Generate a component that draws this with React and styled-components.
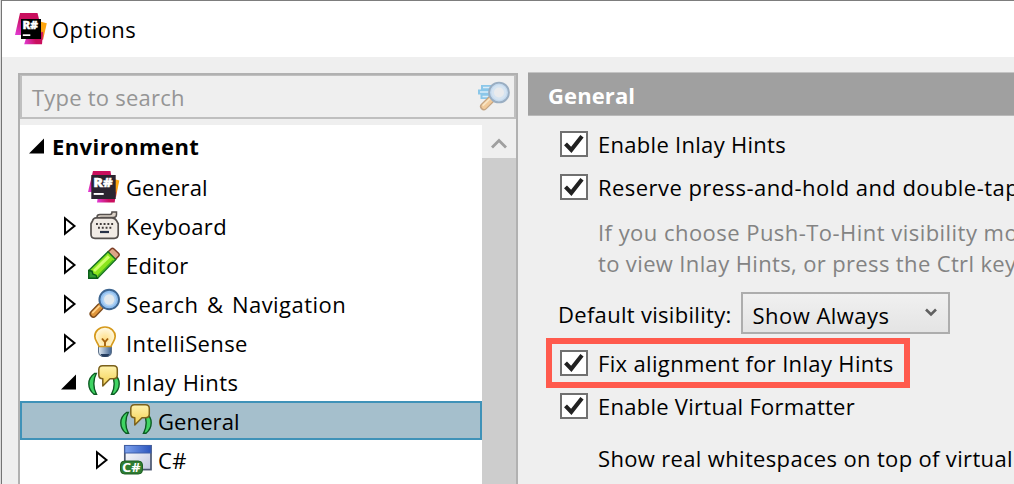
import React from "react";
import styled, { createGlobalStyle } from "styled-components";

const GlobalStyle = createGlobalStyle`
  * {
    box-sizing: border-box;
  }
  body {
    margin: 0;
    overflow: hidden;
    background: #dcdcdc;
  }
  svg {
    flex: none;
    overflow: visible;
  }
`;

/* ---------- icons ---------- */

const ReSharperDefs = () => (
  <defs>
    <linearGradient id="rsLeft" x1="0.6" y1="0" x2="0.1" y2="1">
      <stop offset="0.35" stopColor="#c90f5e" />
      <stop offset="1" stopColor="#e03ad0" />
    </linearGradient>
    <linearGradient id="rsBottom" x1="0" y1="0.8" x2="1" y2="0.6">
      <stop offset="0" stopColor="#e03ad0" />
      <stop offset="0.6" stopColor="#c90f5e" />
    </linearGradient>
    <linearGradient id="rsRight" x1="0.6" y1="0" x2="0.3" y2="1">
      <stop offset="0.4" stopColor="#fda50f" />
      <stop offset="1" stopColor="#e0453a" />
    </linearGradient>
  </defs>
);

const ReSharperText = styled.text`
  fill: #fff;
  stroke: #fff;
  stroke-width: 0.4px;
  font-family: "Open Sans", sans-serif;
  font-weight: 800;
`;

const ReSharperIcon = () => (
  <svg width="32" height="32" viewBox="0 0 32 32">
    <ReSharperDefs />
    <path d="M25 8.500l6.800 1.700L28 27l-6-4z" fill="url(#rsRight)" />
    <path d="M5 0h17.500l2.500 10-12 12H0z" fill="url(#rsLeft)" />
    <path d="M12 22l16-3-1 12.300H9.200z" fill="url(#rsBottom)" />
    <rect x="6" y="6" width="20" height="20" fill="#000" />
    <ReSharperText x="7.500" y="16" fontSize="10.5" textLength="15.5" lengthAdjust="spacingAndGlyphs">
      R#
    </ReSharperText>
    <rect x="7.800" y="21.300" width="7.500" height="1.700" fill="#fff" />
  </svg>
);

const ReSharperSmallIcon = () => (
  <svg width="32" height="32" viewBox="0 0 32 32">
    <ReSharperDefs />
    <path d="M26 8l5.300 1.500L28 26l-6-3z" fill="url(#rsRight)" />
    <path d="M5 0h17.500l1.500 10-12 11H0z" fill="url(#rsLeft)" />
    <path d="M10 25l18-4-1.300 10.500H9z" fill="url(#rsBottom)" />
    <rect x="3.300" y="4" width="24.400" height="24" fill="#2b2430" />
    <ReSharperText x="5.2" y="15.8" fontSize="12.8" textLength="19.5" lengthAdjust="spacingAndGlyphs">
      R#
    </ReSharperText>
    <rect x="5.700" y="22" width="10" height="1.900" fill="#fff" />
  </svg>
);

const KeyboardIcon = () => (
  <svg width="32" height="32" viewBox="0 0 32 32">
    <path
      d="M9 8.500V7q0-2.500 3-2.500h10q2 0 2-2.500h4.500v2.500q0 3-3 3H13v2"
      fill="#ddd3c8"
      stroke="#55504e"
      strokeWidth="1.500"
    />
    <path
      d="M8 7.800h16q3 0 4.700 3l1.500 3v10.500q0 4-4 4H7q-4 0-4-4V13.800l1.500-3q1-3 3.500-3z"
      fill="#f1ebe5"
      stroke="#55504e"
      strokeWidth="1.700"
    />
    <path
      d="M8 14h18M10 17.800h15"
      stroke="#413c3b"
      strokeWidth="2"
      strokeDasharray="1.900 1.900"
    />
    <path d="M12 22h9" stroke="#283248" strokeWidth="2.200" />
  </svg>
);

const PencilIcon = () => (
  <svg width="32" height="32" viewBox="0 0 32 32">
    <path
      d="M20 3l3-3q1.500-1.400 3 0l4.500 4.300q1.400 1.500 0 3l-3.500 3.500z"
      fill="#dda586"
      stroke="#7c3d25"
      strokeWidth="1.500"
    />
    <path d="M.8 21.500L20 2.800l7.700 7.700L9.500 29.200H.8z" fill="#8be51d" stroke="#177324" strokeWidth="1.500" />
    <path d="M5 21L19.800 6.200l2.200 2.200L7 23z" fill="#d0ff6c" />
    <path d="M9.300 26.500L24.800 10.700l1 1L10 27.800z" fill="#46b51c" />
    <path d="M.8 21.500l3.200.700 1 3 3 1 1.300 3H.8z" fill="#2f9c30" stroke="#095b18" strokeWidth="1.400" />
  </svg>
);

const MagnifierIcon = () => (
  <svg width="32" height="32" viewBox="0 0 32 32">
    <path d="M12 19L5.300 26" stroke="#7d4c1d" strokeWidth="7.600" strokeLinecap="round" />
    <path d="M12.500 18.500L5.500 25.800" stroke="#e0953a" strokeWidth="5" strokeLinecap="round" />
    <path d="M11 18.300L4.800 24.600" stroke="#ffd28a" strokeWidth="1.800" strokeLinecap="round" />
    <circle cx="21.200" cy="11.500" r="9.800" fill="#8fbff0" stroke="#3d6590" strokeWidth="1.900" />
    <circle cx="21.200" cy="11.500" r="7" fill="#b0d2f3" />
    <circle cx="21.200" cy="11.500" r="5.200" fill="#e2e9ed" />
  </svg>
);

const SearchBoxIcon = () => (
  <svg width="34" height="32" viewBox="0 0 34 32" opacity="0.6">
    <path d="M4 6.500h12M1 11h14M3.500 15.500h9" stroke="#4aaee6" strokeWidth="4.800" />
    <path d="M6 6.500h9M3 11h10M5.500 15.500h6" stroke="#cdecff" strokeWidth="1.600" />
    <path d="M14 18.500L6.800 25.500" stroke="#a8743c" strokeWidth="7.600" strokeLinecap="round" />
    <path d="M14.500 18L7 25.300" stroke="#f3b263" strokeWidth="5.200" strokeLinecap="round" />
    <path d="M12.500 18.200L6.300 24.200" stroke="#ffdfa8" strokeWidth="1.800" strokeLinecap="round" />
    <circle cx="22" cy="11.500" r="9.900" fill="#a9cdf0" stroke="#6283a5" strokeWidth="1.900" />
    <circle cx="22" cy="11.500" r="7.500" fill="#c6def3" />
    <circle cx="22" cy="11.500" r="5" fill="#e8eaec" />
  </svg>
);

const BulbIcon = () => (
  <svg width="32" height="32" viewBox="0 0 32 32">
    <defs>
      <linearGradient id="bulbBase" x1="0" y1="0" x2="1" y2="0">
        <stop offset="0" stopColor="#e4edf5" />
        <stop offset="1" stopColor="#3f628f" />
      </linearGradient>
      <radialGradient id="bulbGlass" cx="0.5" cy="0.6" r="0.6">
        <stop offset="0" stopColor="#ffe08a" />
        <stop offset="1" stopColor="#fffbe9" />
      </radialGradient>
    </defs>
    <path d="M10.500 19h13v6q0 3.500-3.500 4.500h-6q-3.500-1-3.500-4.500z" fill="url(#bulbBase)" stroke="#5c7089" strokeWidth="1" />
    <path d="M12.500 27h9q-1 3-4.500 3t-4.500-3z" fill="#263e60" />
    <path
      d="M17 0c6 0 10.200 4.300 10.200 9.300 0 4.200-2.700 5.700-4.200 10.200H11c-1.500-4.500-4.200-6-4.200-10.200C6.800 4.300 11 0 17 0z"
      fill="url(#bulbGlass)"
      stroke="#d69a1c"
      strokeWidth="1.700"
    />
    <path d="M14 11.500l3 3.500 3-3.500M17 15v4" fill="none" stroke="#a5620f" strokeWidth="1.900" />
  </svg>
);

const HintsIcon = () => (
  <svg width="32" height="32" viewBox="0 0 32 32">
    <defs>
      <linearGradient id="bubble" x1="0" y1="0" x2="0" y2="1">
        <stop offset="0" stopColor="#fff3ae" />
        <stop offset="1" stopColor="#f3cf50" />
      </linearGradient>
    </defs>
    <path
      d="M8.300 7.500H6.500Q.8 11.500.8 17.700T6 28.300h2.500Q5.800 23.500 5.800 17.700T8.300 7.500z"
      fill="#3fd463"
      stroke="#0b5a22"
      strokeWidth="1.400"
    />
    <path
      d="M23.700 7.500h1.800q5.700 4 5.700 10.200T26 28.300h-2.500q2.700-4.800 2.700-10.600T23.700 7.500z"
      fill="#3fd463"
      stroke="#0b5a22"
      strokeWidth="1.400"
    />
    <path
      d="M14.500-.2h11q3.800 0 3.800 3.800v5.400q0 3.800-3.800 3.800H22L14.800 20v-7.200q-4 0-4-3.800V3.600q0-3.800 3.700-3.800z"
      fill="url(#bubble)"
      stroke="#7b611c"
      strokeWidth="1.500"
      strokeLinejoin="round"
    />
  </svg>
);

const CSharpIcon = () => (
  <svg width="32" height="32" viewBox="0 0 32 32">
    <defs>
      <linearGradient id="winBar" x1="0" y1="0" x2="1" y2="0">
        <stop offset="0" stopColor="#7fa3ee" />
        <stop offset="1" stopColor="#2b55bd" />
      </linearGradient>
      <linearGradient id="winBody" x1="0" y1="0" x2="1" y2="1">
        <stop offset="0" stopColor="#ffffff" />
        <stop offset="1" stopColor="#c0c7e0" />
      </linearGradient>
    </defs>
    <rect x="4.800" y="1.800" width="26.200" height="23.800" fill="url(#winBody)" stroke="#4b5670" strokeWidth="1.700" />
    <rect x="4.800" y="1.500" width="26.200" height="7.500" fill="url(#winBar)" stroke="#3f5fa8" strokeWidth="1" />
    <rect x="0.500" y="17" width="22" height="13" rx="4" fill="#2f7d32" stroke="#1e5f24" strokeWidth="1" />
    <text
      x="2"
      y="27.800"
      fill="#fff"
      fontFamily="Open Sans, sans-serif"
      fontWeight="700"
      fontSize="12.500"
      textLength="18.500"
      lengthAdjust="spacingAndGlyphs"
    >
      C#
    </text>
  </svg>
);

const CheckMark = () => (
  <svg width="24" height="22" viewBox="0 0 24 22">
    <path d="M3.500 10.800l5.800 6L20 3.300" fill="none" stroke="#212121" strokeWidth="4.100" />
  </svg>
);

const Arrow = ({ open }) => (
  <svg width="16" height="20" viewBox="0 0 16 20">
    {open ? (
      <path d="M15 2.500v15H0z" fill="#000" />
    ) : (
      <path d="M4 2.300v15.400L13.500 10z" fill="#fff" stroke="#000" strokeWidth="2" />
    )}
  </svg>
);

/* ---------- data ---------- */

const treeItems = [
  { label: "Environment", level: 0, arrow: "open", spacing: 0.42 },
  { label: "General", level: 1, icon: <ReSharperSmallIcon />, spacing: 0.1 },
  { label: "Keyboard", level: 1, arrow: "closed", icon: <KeyboardIcon />, spacing: 0.35 },
  { label: "Editor", level: 1, arrow: "closed", icon: <PencilIcon />, spacing: 0.2 },
  {
    label: "Search & Navigation",
    level: 1,
    arrow: "closed",
    icon: <MagnifierIcon />,
    spacing: 0.45,
    wordSpacing: 2.4,
  },
  { label: "IntelliSense", level: 1, arrow: "closed", icon: <BulbIcon />, spacing: 0.38 },
  { label: "Inlay Hints", level: 1, arrow: "open", icon: <HintsIcon />, spacing: 0.42 },
  { label: "General", level: 2, icon: <HintsIcon />, selected: true, spacing: 0.1 },
  { label: "C#", level: 2, arrow: "closed", icon: <CSharpIcon />, spacing: 0.5 },
];

const CheckOption = ({ label, spacing }) => (
  <OptionRow>
    <CheckBox>
      <CheckMark />
    </CheckBox>
    <Label $spacing={spacing}>{label}</Label>
  </OptionRow>
);

const App = () => {
  return (
    <>
      <GlobalStyle />
      <Window>
        <TitleBar>
          <ReSharperIcon />
          <Label $spacing={0.42}>Options</Label>
        </TitleBar>
        <Body>
          <Sidebar>
            <SearchBox>
              <Label $spacing={0.22}>Type to search</Label>
              <SearchBoxIcon />
            </SearchBox>
            <TreeArea>
              <Tree>
                {treeItems.map((item, i) => (
                  <TreeRow key={i} $level={item.level} $selected={item.selected}>
                    <ArrowSlot>{item.arrow && <Arrow open={item.arrow === "open"} />}</ArrowSlot>
                    {item.icon && <IconSlot>{item.icon}</IconSlot>}
                    <Label $spacing={item.spacing} $wordSpacing={item.wordSpacing}>
                      {item.label}
                    </Label>
                  </TreeRow>
                ))}
              </Tree>
              <ScrollBar>
                <ScrollButton>
                  <svg width="16" height="12" viewBox="0 0 16 12">
                    <path d="M1 9.500l7-7L15 9.500" fill="none" stroke="#9f9f9f" strokeWidth="2.800" />
                  </svg>
                </ScrollButton>
              </ScrollBar>
            </TreeArea>
          </Sidebar>
          <Page>
            <PageHeader>
              <Label $spacing={0.1}>General</Label>
            </PageHeader>
            <Options>
              <CheckOption label="Enable Inlay Hints" spacing={0.29} />
              <CheckOption label="Reserve press-and-hold and double-tap" spacing={0.45} />
              <Hint>
                <Label $spacing={0.46}>If you choose Push-To-Hint visibility mo</Label>
                <Label $spacing={0.36}>to view Inlay Hints, or press the Ctrl key</Label>
              </Hint>
              <VisibilityRow>
                <Label $spacing={0.3}>Default visibility:</Label>
                <Select>
                  <Label $spacing={0.46}>Show Always</Label>
                  <svg width="12" height="10" viewBox="0 0 12 10">
                    <path d="M1-.500l5 5 5-5" fill="none" stroke="#606060" strokeWidth="2.600" />
                  </svg>
                </Select>
              </VisibilityRow>
              <Highlight>
                <CheckOption label="Fix alignment for Inlay Hints" spacing={0.34} />
              </Highlight>
              <CheckOption label="Enable Virtual Formatter" spacing={0.26} />
              <Note>
                <Label $spacing={0.34}>Show real whitespaces on top of virtual</Label>
              </Note>
            </Options>
          </Page>
        </Body>
      </Window>
    </>
  );
};

export default App;

const Window = styled.div`
  display: flex;
  flex-flow: column nowrap;
  height: 484px;
  margin-left: 1px;
  overflow: hidden;
  border-top: 1px solid #7d7d7d;
  border-left: 1px solid #757575;
  background: #efefef;
  color: #000;
  font-family: "Open Sans", "Noto Sans", sans-serif;
  font-size: 22px;
  line-height: 30px;
`;

const Label = styled.span`
  white-space: nowrap;
  letter-spacing: ${({ $spacing }) => $spacing}px;
  word-spacing: ${({ $wordSpacing = 0 }) => $wordSpacing}px;
`;

const TitleBar = styled.div`
  display: flex;
  flex: none;
  align-items: center;
  gap: 5px;
  height: 56px;
  padding-left: 13px;
  background: #fff;
`;

const Body = styled.div`
  display: flex;
  flex: 1;
  gap: 10px;
  min-height: 0;
  padding: 15px 0 0 16px;
`;

const Sidebar = styled.div`
  display: flex;
  flex-flow: column nowrap;
  flex: none;
  width: 500px;
  margin-top: 1px;
  border: 2px solid #b1b1b1;
  border-bottom: none;
`;

const SearchBox = styled.div`
  display: flex;
  flex: none;
  align-items: center;
  justify-content: space-between;
  height: 44px;
  padding: 1px 3px 0 10px;
  border: 2px solid #bfbfbf;
  border-top-width: 1px;
  color: #959595;
`;

const TreeArea = styled.div`
  display: flex;
  flex: 1;
  min-height: 0;
  padding-top: 6px;
`;

const Tree = styled.div`
  flex: 1;
  overflow: hidden;
  background: #fff;
`;

const TreeRow = styled.div`
  display: flex;
  align-items: center;
  height: ${({ $level }) => ($level === 0 ? 42 : 39)}px;
  padding-left: ${({ $level }) => 7 + $level * 32}px;
  border: 2px solid ${({ $selected }) => ($selected ? "#3f92b8" : "transparent")};
  background: ${({ $selected }) => ($selected ? "#a5bfcc" : "transparent")};
  font-weight: ${({ $level }) => ($level === 0 ? 700 : 400)};
`;

const ArrowSlot = styled.div`
  display: flex;
  flex: none;
  width: 23px;
`;

const IconSlot = styled.div`
  display: flex;
  flex: none;
  width: 38px;
  margin-left: 4px;
`;

const ScrollBar = styled.div`
  flex: none;
  width: 34px;
  background: #cdcdcd;
`;

const ScrollButton = styled.div`
  display: flex;
  align-items: center;
  justify-content: center;
  height: 33px;
  padding-top: 4px;
  background: #efefef;
`;

const Page = styled.div`
  flex: 1;
  min-width: 0;
  overflow: hidden;
`;

const PageHeader = styled.div`
  display: flex;
  align-items: center;
  height: 44px;
  padding: 2px 0 0 20px;
  border-top: 1px solid #c4c4c4;
  border-bottom: 1px solid #b9b9b9;
  background: #a0a0a0;
  color: #fff;
  font-weight: 700;
`;

const Options = styled.div`
  display: flex;
  flex-flow: column nowrap;
  align-items: flex-start;
  padding: 6px 0 0 32px;
`;

const OptionRow = styled.div`
  display: flex;
  align-items: center;
  gap: 10px;
  height: 43px;
`;

const CheckBox = styled.div`
  display: flex;
  flex: none;
  width: 28px;
  height: 26px;
  border: 2px solid #707070;
  background: #fff;
`;

const Hint = styled.div`
  display: flex;
  flex-flow: column nowrap;
  padding: 9px 0 0 38px;
  color: #838383;
  line-height: 31px;
`;

const VisibilityRow = styled.div`
  display: flex;
  align-items: center;
  height: 42px;
  margin-top: 13px;
  margin-left: -2px;
  gap: 9px;

  > span {
    padding-top: 2px;
  }
`;

const Select = styled.div`
  display: flex;
  align-items: center;
  justify-content: space-between;
  width: 209px;
  height: 42px;
  padding: 4px 11px 0 10px;
  border: 2px solid #adadad;
  background: linear-gradient(#f0f0f0, #e4e4e4);
`;

const Highlight = styled.div`
  display: flex;
  align-items: center;
  width: 364px;
  height: 50px;
  margin: 4px 0 -4px -14px;
  padding-left: 8px;
  border: 6px solid #ff5a4d;
`;

const Note = styled.div`
  padding: 16px 0 0 38px;
`;
